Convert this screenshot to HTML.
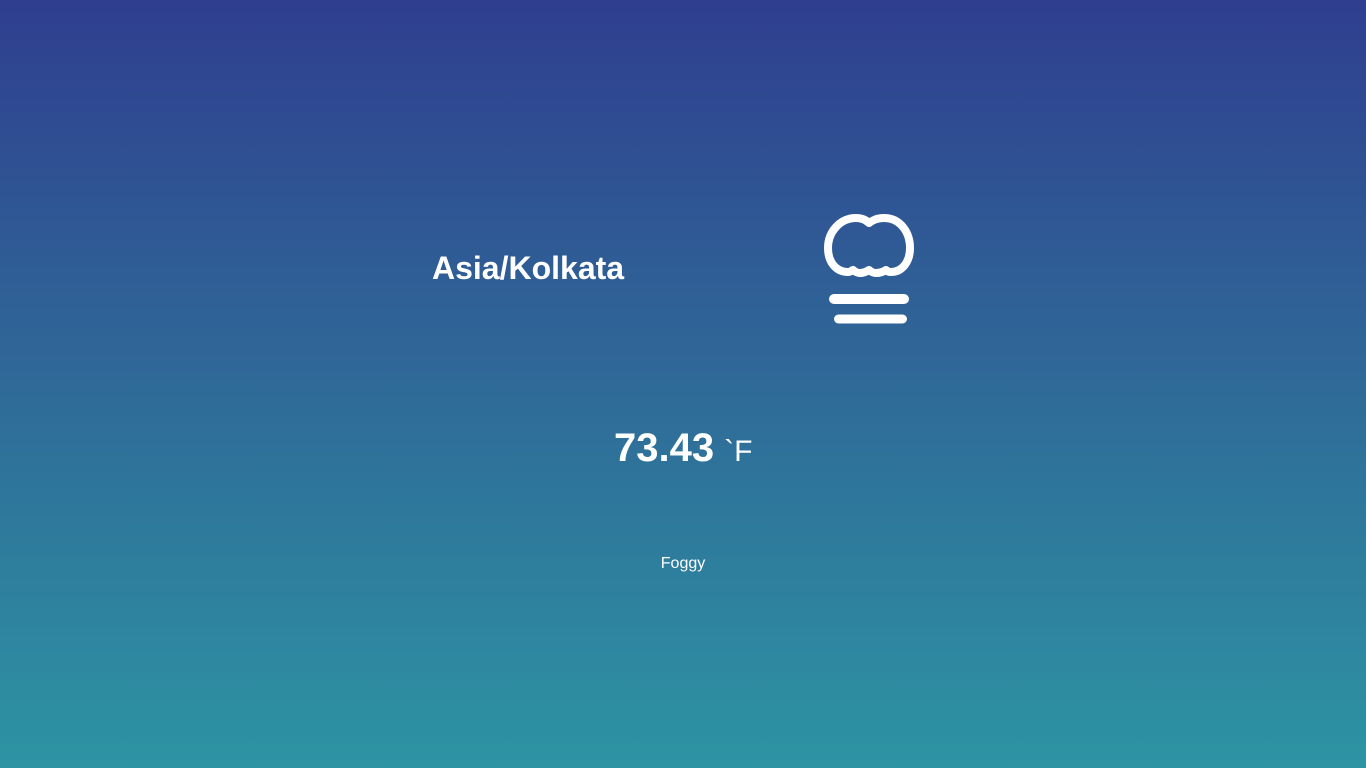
<!DOCTYPE html>
<html><head><meta charset="utf-8"><style>
html,body{margin:0;padding:0;width:1366px;height:768px;overflow:hidden}
body{background:linear-gradient(to bottom,#2f3e8f 0%,#2f6a98 50%,#2d94a3 100%);font-family:"Liberation Sans",Arial,sans-serif;color:#fff;position:relative}
.city{position:absolute;left:432px;top:248px;font-size:32px;font-weight:bold;line-height:40px}
.temp{position:absolute;left:614px;top:424px;font-size:40px;font-weight:bold;line-height:48px;white-space:nowrap}
.temp span{font-size:30px;font-weight:normal;margin-left:10px}
.desc{position:absolute;left:0;width:1366px;text-align:center;top:554px;font-size:16px;line-height:20px}
svg{position:absolute;left:0;top:0}
</style></head><body>
<div class="city">Asia/Kolkata</div>
<svg width="1366" height="768">
<path d="M848 272 C836 272 828 262 828 248 C828 232 840 218 856 218 C863 218 867 221 869 223 C872 221 876 218 884 218 C900 218 910 232 910 248 C910 262 902 272 891 272 C888 272 886 270 886 270 C883 272 880 273 876 273 C872 273 869 270 869 270 C866 272 863 273 860 273 C856 273 853 270 853 270 C851 271 850 272 848 272 Z" fill="none" stroke="#fff" stroke-width="8" stroke-linejoin="round"/>
<line x1="834" y1="299" x2="904" y2="299" stroke="#fff" stroke-width="10" stroke-linecap="round"/>
<line x1="838.5" y1="319" x2="902.5" y2="319" stroke="#fff" stroke-width="9" stroke-linecap="round"/>
</svg>
<div class="temp">73.43<span>`F</span></div>
<div class="desc">Foggy</div>
</body></html>
